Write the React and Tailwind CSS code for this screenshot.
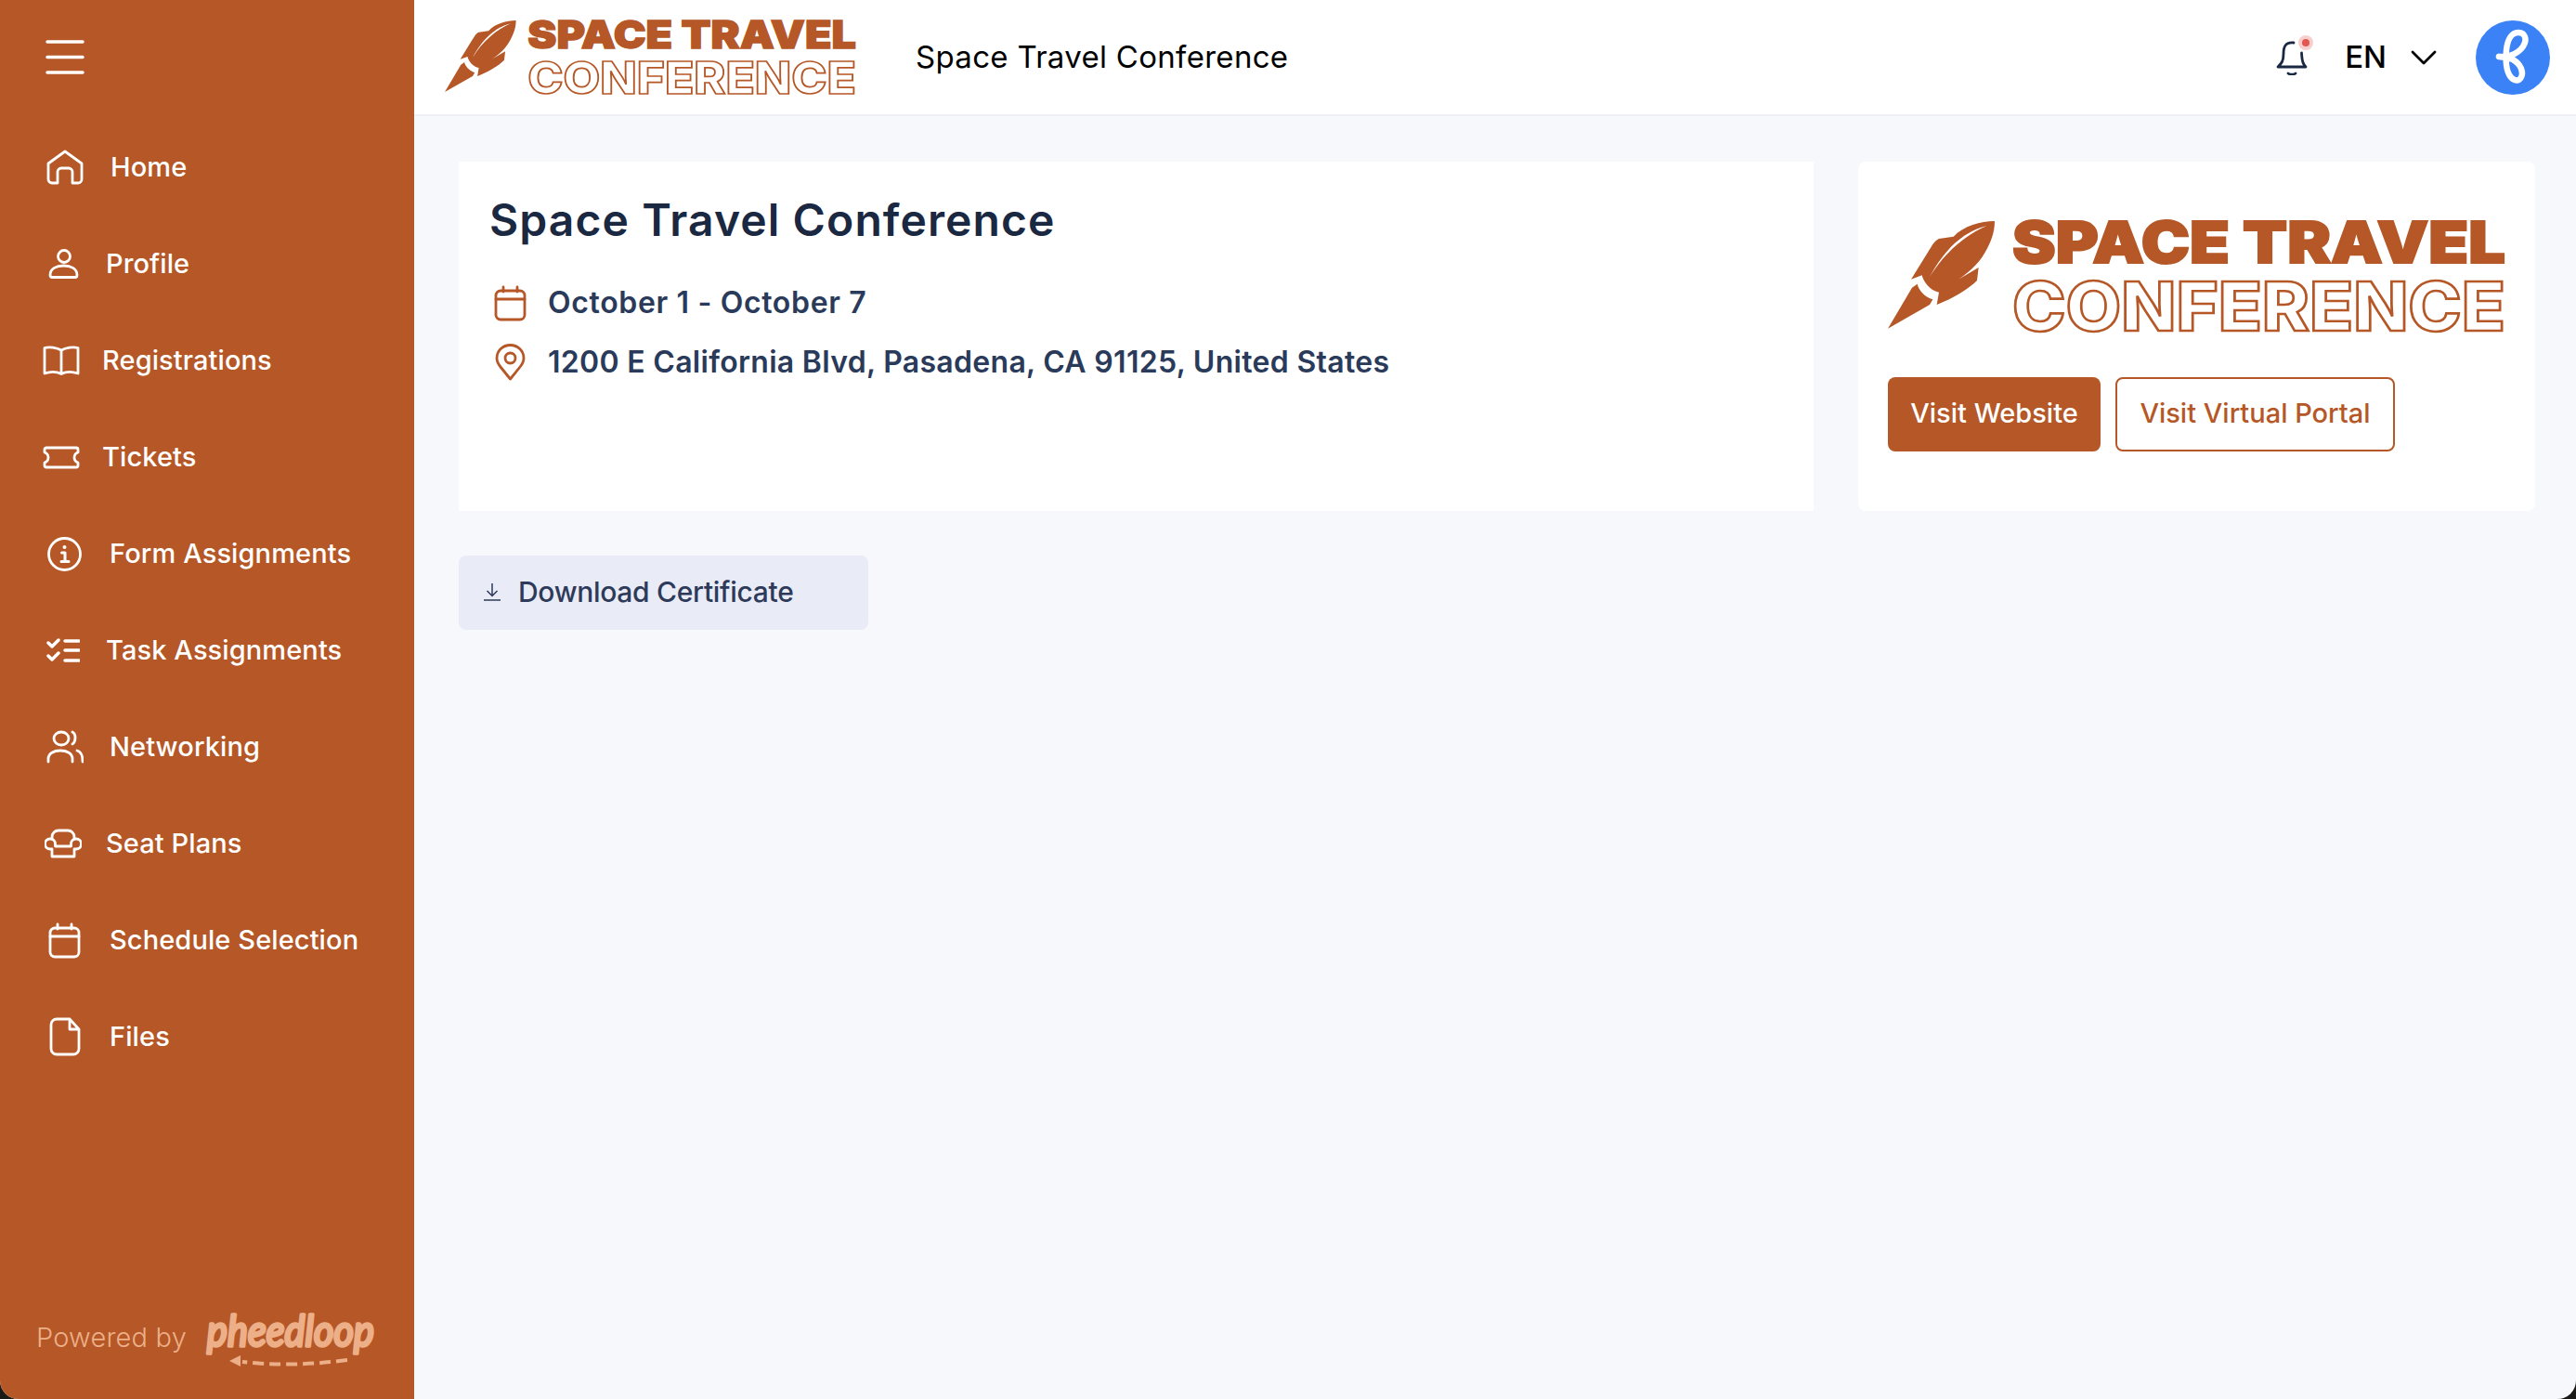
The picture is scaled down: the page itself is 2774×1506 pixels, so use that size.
const Stroke = ({ w, h, children, className = "" }) => (
  <svg
    width={w}
    height={h}
    viewBox={`0 0 ${w} ${h}`}
    fill="none"
    stroke="currentColor"
    strokeWidth="2.800"
    strokeLinecap="round"
    strokeLinejoin="round"
    className={`shrink-0 ${className}`}
  >
    {children}
  </svg>
);

const CalendarIcon = ({ className }) => (
  <Stroke w={35} h={39} className={className}>
    <rect x="2" y="6" width="31" height="31" rx="5" />
    <path d="M2 15H33M10 2V7M25 2V7" />
  </Stroke>
);

const navItems = [
  {
    label: "Home",
    row: "pl-[50px] gap-[29px]",
    icon: (
      <Stroke w={40} h={38}>
        <path d="M20 2L38 15V32a4 4 0 0 1-4 4H28V24a4 4 0 0 0-4-4H16a4 4 0 0 0-4 4V36H6a4 4 0 0 1-4-4V15Z" />
      </Stroke>
    ),
  },
  {
    label: "Profile",
    row: "pl-[52px] gap-[29px]",
    icon: (
      <Stroke w={33} h={32}>
        <circle cx="17" cy="8" r="6.500" />
        <path d="M2 28c0-7 7-10 14.500-10s14.500 3 14.500 10c0 2-1 2.500-2 2.500H4c-1 0-2-.5-2-2.500Z" />
      </Stroke>
    ),
  },
  {
    label: "Registrations",
    row: "pl-[46px] gap-[24px]",
    icon: (
      <Stroke w={40} h={32}>
        <path d="M20 5C15 2 7 1 2 2.500V30C8 28 15 28 20 30.500C25 28 32 28 38 30V2.500C33 1 25 2 20 5ZM20 5V30" />
      </Stroke>
    ),
  },
  {
    label: "Tickets",
    row: "pl-[46px] gap-[24px]",
    icon: (
      <Stroke w={40} h={25}>
        <path d="M4 2H36a2 2 0 0 1 2 2V7a6 6 0 0 0-4 5.500a6 6 0 0 0 4 5.500V21a2 2 0 0 1-2 2H4a2 2 0 0 1-2-2V18a6 6 0 0 0 4-5.500a6 6 0 0 0-4-5.500V4a2 2 0 0 1 2-2Z" />
      </Stroke>
    ),
  },
  {
    label: "Form Assignments",
    row: "pl-[51px] gap-[30px]",
    icon: (
      <Stroke w={37} h={37}>
        <circle cx="18.500" cy="18.500" r="17" />
        <path d="M15.500 17H19V26M15 26.500H23" strokeWidth="3" />
        <circle cx="18.500" cy="11" r="2" fill="currentColor" stroke="none" />
      </Stroke>
    ),
  },
  {
    label: "Task Assignments",
    row: "pl-[50px] gap-[28px]",
    icon: (
      <Stroke w={36} h={28}>
        <path d="M2 6L6 10L13 3M2 20L6 24L13 17" strokeWidth="3.500" />
        <path d="M20 4H35M20 14H35M20 25H35" strokeWidth="3.500" />
      </Stroke>
    ),
  },
  {
    label: "Networking",
    row: "pl-[50px] gap-[28px]",
    icon: (
      <Stroke w={40} h={36}>
        <ellipse cx="16" cy="9" rx="8" ry="7" />
        <path d="M28 2c4 2 4 10 0 13M2 34V31c0-6 6-9 13-9s13 3 13 9v3M33 22c4 1 6 5 6 12" />
      </Stroke>
    ),
  },
  {
    label: "Seat Plans",
    row: "pl-[48px] gap-[26px]",
    icon: (
      <Stroke w={40} h={32}>
        <path d="M8 11V9a7 7 0 0 1 7-7H25a7 7 0 0 1 7 7V11" />
        <path d="M8 30V22H6a5.500 5.500 0 0 1 0-11a5.500 5.500 0 0 1 5.500 5.500V19H28.500V16.500A5.500 5.500 0 0 1 34 11a5.500 5.500 0 0 1 0 11H32V30H8Z" />
      </Stroke>
    ),
  },
  {
    label: "Schedule Selection",
    row: "pl-[52px] gap-[31px]",
    icon: <CalendarIcon />,
  },
  {
    label: "Files",
    row: "pl-[53px] gap-[31px]",
    icon: (
      <Stroke w={34} h={42}>
        <path d="M8 2H22L32 13V34a6 6 0 0 1-6 6H8a6 6 0 0 1-6-6V8a6 6 0 0 1 6-6ZM22 2V13H32" />
      </Stroke>
    ),
  },
];

const Logo = ({ className }) => (
  <svg viewBox="0 0 665 120" className={`overflow-visible ${className}`}>
    <g transform="scale(0.3333) translate(-40 -40)" fill="#b55726">
      <path d="M385 40C340 40 285 55 252 90L205 97C198 99 190 108 185 115L115 228L150 215C155 235 175 265 205 270L198 310C250 290 300 260 328 232L333 190L268 228C310 200 340 170 360 130C378 95 385 70 385 40Z" />
      <path d="M360 55C300 70 235 110 175 220C225 140 290 85 360 55Z" fill="#ffffff" />
      <path d="M40 387L118 255L135 243C140 265 160 285 185 293L175 310Z" />
    </g>
    <text
      x="134"
      y="45"
      textLength="531"
      lengthAdjust="spacingAndGlyphs"
      fontFamily="Inter, sans-serif"
      fontWeight="900"
      fontSize="62"
      fill="#b55726"
      stroke="#b55726"
      strokeWidth="2"
    >
      SPACE TRAVEL
    </text>
    <text
      x="134"
      y="118"
      textLength="531"
      lengthAdjust="spacingAndGlyphs"
      fontFamily="Inter, sans-serif"
      fontWeight="800"
      fontSize="73"
      fill="none"
      stroke="#b55726"
      strokeWidth="2.600"
    >
      CONFERENCE
    </text>
  </svg>
);

const PheedloopLogo = () => (
  <svg width="188" height="63" viewBox="0 0 188 63" className="shrink-0 overflow-visible">
    <text
      x="4"
      y="41"
      textLength="180"
      lengthAdjust="spacingAndGlyphs"
      fontFamily="Lato, sans-serif"
      fontStyle="italic"
      fontWeight="400"
      fontSize="46"
      fill="#ecaf88"
      stroke="#ecaf88"
      strokeWidth="3.500"
      strokeLinejoin="round"
    >
      pheedloop
    </text>
    <path d="M155 56Q95 64 42 58" fill="none" stroke="#ecaf88" strokeWidth="4" strokeDasharray="12 6" />
    <path d="M28 57L40 51V63Z" fill="#ecaf88" />
  </svg>
);

const Sidebar = () => (
  <aside className="flex h-full w-[446px] shrink-0 flex-col bg-[#b55726] text-white">
    <div className="flex h-[122px] shrink-0 items-center pl-[49px]">
      <svg width="42" height="37" viewBox="0 0 42 37" fill="none" stroke="currentColor" strokeWidth="3.500" strokeLinecap="round">
        <path d="M2 2H40M2 18.500H40M2 35H40" />
      </svg>
    </div>
    <nav className="mt-[6px] flex flex-col">
      {navItems.map((item) => (
        <a key={item.label} className={`flex h-[104px] items-center text-[29px] font-medium tracking-[0.1px] ${item.row}`}>
          {item.icon}
          <span>{item.label}</span>
        </a>
      ))}
    </nav>
    <div className="mt-auto mb-[35px] flex items-center gap-[18px] pl-[39px] text-[29px] font-light tracking-[0.2px] text-[#ecaf88]">
      <span>Powered by</span>
      <PheedloopLogo />
    </div>
  </aside>
);

const Header = () => (
  <header className="flex h-[125px] shrink-0 items-center border-b-2 border-[#eef0f8] bg-white">
    <Logo className="ml-[33px] h-[80px] w-[443px]" />
    <h1 className="ml-[64px] text-[33px] tracking-[0.3px] text-black">Space Travel Conference</h1>
    <div className="ml-auto flex items-center pr-[28px]">
      <div className="relative">
        <Stroke w={34} h={38} className="text-[#1a2842]">
          <path d="M19 3C9 2 8 9 8 15C8 23 6 25 2 29H32C29 26 28 23 27.500 14" />
          <path d="M13 36C15 37.500 19 37.500 21 36" />
        </Stroke>
        <span className="absolute -right-[6px] -top-[5px] flex h-[16px] w-[16px] items-center justify-center rounded-full bg-[#f7d0ce]">
          <span className="h-[8px] w-[8px] rounded-full bg-[#e25550]" />
        </span>
      </div>
      <span className="ml-[40px] text-[33px] font-medium text-black">EN</span>
      <svg width="28" height="16" viewBox="0 0 28 16" fill="none" stroke="black" strokeWidth="2.800" strokeLinecap="round" strokeLinejoin="round" className="ml-[26px]">
        <path d="M2 2L14 14L26 2" />
      </svg>
      <div className="ml-[42px] flex h-[80px] w-[80px] items-center justify-center rounded-full bg-[#3b82f6]">
        <svg width="80" height="80" viewBox="0 0 80 80" fill="none" stroke="white" strokeWidth="6.500" strokeLinecap="round" strokeLinejoin="round">
          <path d="M25 39C31 41 45 37 51 28C56 20 53 13 46 13C38 13 34 22 33 32C32 44 33 58 40 63C47 68 52 60 49 52C46 44 36 38 25 39" />
        </svg>
      </div>
    </div>
  </header>
);

const App = () => (
  <div className="h-screen w-full overflow-hidden bg-[#1c1a16] font-['Inter',sans-serif]">
    <div className="flex h-full overflow-hidden rounded-b-[20px] bg-[#f7f8fc]">
      <Sidebar />
      <div className="flex min-w-0 flex-1 flex-col">
        <Header />
        <main className="pl-[48px] pr-[44px] pt-[49px]">
          <div className="flex gap-[48px]">
            <section className="h-[376px] w-[1459px] bg-white pl-[33px] pt-[29px]">
              <h2 className="text-[48px] leading-[68px] font-semibold tracking-[1.1px] text-[#1a2842]">Space Travel Conference</h2>
              <div className="mt-[23px] flex h-[64px] items-center text-[32px] font-semibold tracking-[0.65px] text-[#2a3a5a]">
                <CalendarIcon className="ml-[5px] text-[#b55726]" />
                <span className="ml-[23px]">October 1 - October 7</span>
              </div>
              <div className="flex h-[64px] items-center text-[32px] font-semibold tracking-[0.3px] text-[#2a3a5a]">
                <Stroke w={33} h={40} className="ml-[6px] text-[#b55726]">
                  <path d="M16.500 38L6 25C2 20 2 17 2 15.500A14.500 14 0 0 1 31 15.500C31 17 31 20 27 25Z" />
                  <circle cx="16.500" cy="15.500" r="5.500" />
                </Stroke>
                <span className="ml-[24px]">1200 E California Blvd, Pasadena, CA 91125, United States</span>
              </div>
            </section>
            <section className="h-[376px] w-[729px] rounded-[8px] bg-white pl-[32px] pt-[64px]">
              <Logo className="h-[120px] w-[665px]" />
              <div className="mt-[48px] flex gap-[16px]">
                <button className="flex h-[80px] w-[229px] items-center justify-center rounded-[8px] bg-[#b55726] pb-[2px] text-[29px] font-medium text-white">
                  Visit Website
                </button>
                <button className="flex h-[80px] w-[301px] items-center justify-center rounded-[8px] border-2 border-[#b55726] pb-[2px] text-[29px] font-medium text-[#b55726]">
                  Visit Virtual Portal
                </button>
              </div>
            </section>
          </div>
          <button className="mt-[48px] flex h-[80px] w-[441px] items-center rounded-[8px] bg-[#e9ecf6] pb-[2px] pl-[27px] text-[30px] font-medium tracking-[-0.3px] text-[#2d3a5a]">
            <svg width="18" height="20" viewBox="0 0 18 20" fill="none" stroke="currentColor" strokeWidth="1.500" className="shrink-0">
              <path d="M9 1V14M3.500 9L9 14.500L14.500 9M0 19H18" />
            </svg>
            <span className="ml-[19px]">Download Certificate</span>
          </button>
        </main>
      </div>
    </div>
  </div>
);

export default App;
